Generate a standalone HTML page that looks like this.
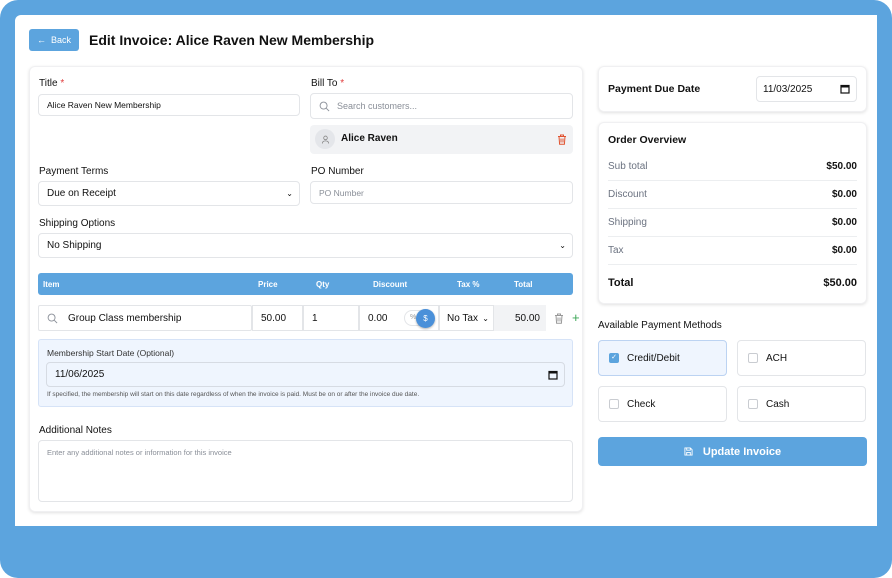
<!DOCTYPE html>
<html><head><meta charset="utf-8"><style>
*{box-sizing:border-box;margin:0;padding:0}
html,body{width:892px;height:578px;overflow:hidden;background:#fff}
body{font-family:"Liberation Sans",sans-serif;color:#111;position:relative}
.bg{position:absolute;left:0;top:0;width:892px;height:578px;background:#5ca4de;border-radius:18px}
.panel{position:absolute;left:15px;top:15px;width:862px;height:511px;background:#fff;border-top-left-radius:6px}
.a{position:absolute}
.card{position:absolute;background:#fff;border-radius:6px;box-shadow:0 1px 3px rgba(0,0,0,.12);border:1px solid #f0f0f2}
.lbl{position:absolute;font-size:10px;color:#111}
.req{color:#e03b3b}
.inp{position:absolute;border:1px solid #e3e5e8;border-radius:4px;background:#fff;font-size:9px;color:#111;display:flex;align-items:center;padding-left:8px}
.ph{color:#8a8f98}
.row{position:absolute;left:608px;width:249px;font-size:10px;display:flex;justify-content:space-between;border-bottom:1px solid #eceef0;padding-bottom:8px}
.row span:first-child{color:#6b7280}
.row span:last-child{font-weight:bold}
.pm{position:absolute;width:129px;height:36px;border:1px solid #e3e5e8;border-radius:4px;font-size:10px;display:flex;align-items:center;padding-left:10px;background:#fff}
.cb{width:10px;height:10px;border:1px solid #c9ccd1;border-radius:2px;margin-right:8px;background:#fff}
.th{position:absolute;top:280px;font-size:8px;color:#fff;font-weight:bold}
</style></head><body>
<div class="bg"></div>
<div class="panel"></div>

<div class="a" style="left:29px;top:29px;width:50px;height:22px;background:#5ca4de;border-radius:3px;color:#fff;font-size:9px;display:flex;align-items:center;justify-content:center">&#8592;&nbsp; Back</div>
<div class="a" style="left:89px;top:32px;font-size:14px;font-weight:bold">Edit Invoice: Alice Raven New Membership</div>

<div class="card" style="left:29px;top:66px;width:554px;height:446px"></div>

<div class="lbl" style="left:39px;top:78px">Title <span class="req">*</span></div>
<div class="inp" style="left:38px;top:94px;width:262px;height:22px;font-size:8.5px">Alice Raven New Membership</div>

<div class="lbl" style="left:311px;top:78px">Bill To <span class="req">*</span></div>
<div class="inp" style="left:310px;top:93px;width:263px;height:26px;padding-left:8px"><svg width="11" height="11" viewBox="0 0 12 12"><circle cx="5" cy="5" r="3.8" fill="none" stroke="#8a8f98" stroke-width="1"/><path d="M8 8l3 3" stroke="#8a8f98" stroke-width="1"/></svg><span class="ph" style="margin-left:7px">Search customers...</span></div>
<div class="a" style="left:310px;top:125px;width:263px;height:29px;background:#f2f3f5;border-radius:4px"></div>
<div class="a" style="left:315px;top:129px;width:20px;height:20px;border-radius:50%;background:#e4e6ea;display:flex;align-items:center;justify-content:center"><svg width="9" height="9" viewBox="0 0 10 10"><circle cx="5" cy="3.2" r="2" fill="none" stroke="#888" stroke-width="0.9"/><path d="M1.5 9.5c0-2 1.5-3 3.5-3s3.5 1 3.5 3" fill="none" stroke="#888" stroke-width="0.9"/></svg></div>
<div class="a" style="left:341px;top:133px;font-size:10px;font-weight:bold">Alice Raven</div>
<svg class="a" style="left:557px;top:134px" width="10" height="11" viewBox="0 0 10 11"><path d="M1 2.5h8M3.5 2.5V1h3v1.5M2 2.5l.6 7.8h4.8L8 2.5M4 4.5v4M6 4.5v4" fill="none" stroke="#e0522f" stroke-width="1"/></svg>

<div class="lbl" style="left:39px;top:166px">Payment Terms</div>
<div class="inp" style="left:38px;top:181px;width:262px;height:25px;font-size:10px">Due on Receipt<span style="position:absolute;right:6px;font-size:8px">&#8964;</span></div>
<div class="lbl" style="left:311px;top:166px">PO Number</div>
<div class="inp" style="left:310px;top:181px;width:263px;height:23px;font-size:8.5px"><span class="ph">PO Number</span></div>

<div class="lbl" style="left:39px;top:218px">Shipping Options</div>
<div class="inp" style="left:38px;top:233px;width:535px;height:25px;font-size:10px">No Shipping<span style="position:absolute;right:6px;font-size:8px">&#8964;</span></div>

<div class="a" style="left:38px;top:273px;width:535px;height:22px;background:#5ca4de;border-radius:3px"></div>
<div class="th" style="left:43px">Item</div>
<div class="th" style="left:258px">Price</div>
<div class="th" style="left:316px">Qty</div>
<div class="th" style="left:373px">Discount</div>
<div class="th" style="left:457px">Tax %</div>
<div class="th" style="left:514px">Total</div>

<div class="inp" style="left:38px;top:305px;width:214px;height:26px;font-size:10px;border-radius:2px"><svg width="11" height="11" viewBox="0 0 12 12"><circle cx="5" cy="5" r="3.8" fill="none" stroke="#8a8f98" stroke-width="1"/><path d="M8 8l3 3" stroke="#8a8f98" stroke-width="1"/></svg><span style="margin-left:10px">Group Class membership</span></div>
<div class="inp" style="left:252px;top:305px;width:51px;height:26px;font-size:10px;border-radius:0">50.00</div>
<div class="inp" style="left:303px;top:305px;width:56px;height:26px;font-size:10px;border-radius:0">1</div>
<div class="inp" style="left:359px;top:305px;width:80px;height:26px;font-size:10px;border-radius:0">0.00</div>
<div class="a" style="left:404px;top:310px;width:24px;height:16px;border:1px solid #e3e5e8;border-radius:8px;background:#fff;font-size:7px;color:#999;padding:3px 0 0 5px">%</div>
<div class="a" style="left:416px;top:309px;width:19px;height:19px;border-radius:50%;background:#4a90d9;color:#fff;font-size:8px;display:flex;align-items:center;justify-content:center;box-shadow:0 1px 2px rgba(0,0,0,.3)">$</div>
<div class="inp" style="left:439px;top:305px;width:55px;height:26px;font-size:10px;border-radius:0;padding-left:7px">No Tax<span style="position:absolute;right:4px;font-size:8px">&#8964;</span></div>
<div class="a" style="left:494px;top:305px;width:52px;height:26px;background:#f2f3f5;font-size:10px;text-align:right;padding:8px 6px 0 0">50.00</div>
<svg class="a" style="left:554px;top:313px" width="10" height="11" viewBox="0 0 10 11"><path d="M1 2.5h8M3.5 2.5V1h3v1.5M2 2.5l.6 7.8h4.8L8 2.5M4 4.5v4M6 4.5v4" fill="none" stroke="#999" stroke-width="1"/></svg>
<div class="a" style="left:572px;top:310px;color:#3aa655;font-size:13px">+</div>

<div class="a" style="left:38px;top:339px;width:535px;height:68px;background:#eff5fe;border:1px solid #d6e3f7;border-radius:3px"></div>
<div class="a" style="left:47px;top:348px;font-size:8.5px;color:#333">Membership Start Date (Optional)</div>
<div class="inp" style="left:46px;top:362px;width:519px;height:25px;font-size:10px;background:#eff5fe;border-color:#d6dbe3">11/06/2025<svg style="position:absolute;right:6px" width="10" height="10" viewBox="0 0 10 10"><rect x="1" y="1.5" width="8" height="7.5" fill="none" stroke="#111" stroke-width="1.2"/><rect x="1" y="1.5" width="8" height="2" fill="#111"/></svg></div>
<div class="a" style="left:47px;top:391px;font-size:6.5px;color:#555">If specified, the membership will start on this date regardless of when the invoice is paid. Must be on or after the invoice due date.</div>

<div class="lbl" style="left:39px;top:425px">Additional Notes</div>
<div class="a" style="left:38px;top:440px;width:535px;height:62px;border:1px solid #e3e5e8;border-radius:4px;font-size:7.5px;color:#8a8f98;padding:7px 8px">Enter any additional notes or information for this invoice</div>

<div class="card" style="left:598px;top:66px;width:269px;height:46px"></div>
<div class="a" style="left:608px;top:83px;font-size:10.5px;font-weight:bold">Payment Due Date</div>
<div class="inp" style="left:756px;top:76px;width:101px;height:26px;font-size:10px;padding-left:6px">11/03/2025<svg style="position:absolute;right:6px" width="10" height="10" viewBox="0 0 10 10"><rect x="1" y="1.5" width="8" height="7.5" fill="none" stroke="#111" stroke-width="1.2"/><rect x="1" y="1.5" width="8" height="2" fill="#111"/></svg></div>

<div class="card" style="left:598px;top:122px;width:269px;height:182px"></div>
<div class="a" style="left:608px;top:134px;font-size:10.5px;font-weight:bold">Order Overview</div>
<div class="row" style="top:161px"><span>Sub total</span><span>$50.00</span></div>
<div class="row" style="top:189px"><span>Discount</span><span>$0.00</span></div>
<div class="row" style="top:217px"><span>Shipping</span><span>$0.00</span></div>
<div class="row" style="top:245px"><span>Tax</span><span>$0.00</span></div>
<div class="row" style="top:277px;border:none;font-size:11px"><span style="color:#111;font-weight:bold">Total</span><span>$50.00</span></div>

<div class="a" style="left:598px;top:320px;font-size:10px">Available Payment Methods</div>
<div class="pm" style="left:598px;top:340px;background:#eff5fe;border-color:#bcd3f2"><div class="cb" style="background:#5ca4de;border-color:#5ca4de;color:#fff;font-size:7px;line-height:8px;text-align:center">&#10003;</div>Credit/Debit</div>
<div class="pm" style="left:737px;top:340px"><div class="cb"></div>ACH</div>
<div class="pm" style="left:598px;top:386px"><div class="cb"></div>Check</div>
<div class="pm" style="left:737px;top:386px"><div class="cb"></div>Cash</div>

<div class="a" style="left:598px;top:437px;width:269px;height:29px;background:#5ca4de;border-radius:4px;color:#fff;font-size:11px;font-weight:bold;display:flex;align-items:center;justify-content:center"><svg width="9" height="9" viewBox="0 0 10 10" style="margin-right:10px"><path d="M1 1h6l2 2v6H1z M3 1v2.5h4V1 M3 9V6h4v3" fill="none" stroke="#fff" stroke-width="1"/></svg>Update Invoice</div>
</body></html>
